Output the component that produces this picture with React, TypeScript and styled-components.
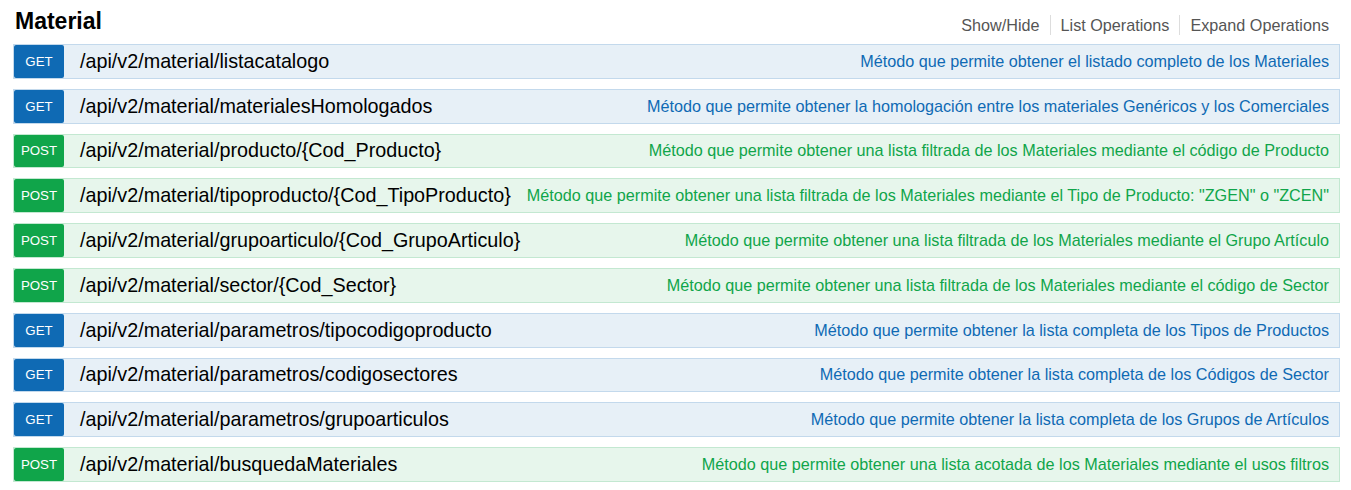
import React from "react";
import styled, { createGlobalStyle } from "styled-components";

const GlobalStyle = createGlobalStyle`
  html, body {
    margin: 0;
    padding: 0;
    background: #ffffff;
    font-family: "Liberation Sans", Arial, sans-serif;
  }
`;

type Method = "get" | "post";

const palette = {
  get: { badge: "#0f6ab4", bg: "#e7f0f7", border: "#c3d9ec", text: "#0f6ab4" },
  post: { badge: "#10a54a", bg: "#e7f6ec", border: "#c3e8d1", text: "#10a54a" },
};

const Page = styled.div`
  padding: 0 11px 0 13px;
`;

const Header = styled.div`
  display: flex;
  justify-content: space-between;
  align-items: flex-start;
  height: 44px;
`;

const Title = styled.h2`
  margin: 9px 0 0 2px;
  font-size: 23px;
  line-height: 24px;
  font-weight: bold;
  color: #000;
`;

const Links = styled.ul`
  display: flex;
  list-style: none;
  margin: 15px 0 0 0;
  padding: 0;
`;

const LinkItem = styled.li<{ $last?: boolean }>`
  font-size: 16.2px;
  line-height: 20px;
  color: #555555;
  padding: 0 10px;
  border-right: ${(p) => (p.$last ? "none" : "1px solid #dddddd")};
  padding-right: ${(p) => (p.$last ? "11px" : "10px")};
`;

const List = styled.ul`
  display: flex;
  flex-direction: column;
  gap: 10px;
  list-style: none;
  margin: 0;
  padding: 0;
`;

const Row = styled.li<{ $m: Method }>`
  display: flex;
  align-items: center;
  box-sizing: border-box;
  height: 34.8px;
  background: ${(p) => palette[p.$m].bg};
  border: 1px solid ${(p) => palette[p.$m].border};
`;

const Badge = styled.span<{ $m: Method }>`
  display: flex;
  align-items: center;
  justify-content: center;
  align-self: stretch;
  width: 50px;
  flex-shrink: 0;
  background: ${(p) => palette[p.$m].badge};
  color: #ffffff;
  font-size: 13.3px;
  border-radius: 2px;
`;

const Path = styled.span`
  margin-left: 16px;
  font-size: 19.75px;
  color: #000;
  white-space: nowrap;
`;

const Desc = styled.span<{ $m: Method }>`
  margin-left: auto;
  padding: 0 10px 0 16px;
  font-size: 16.2px;
  color: ${(p) => palette[p.$m].text};
  white-space: nowrap;
`;

const ops: { m: Method; path: string; desc: string }[] = [
  { m: "get", path: "/api/v2/material/listacatalogo", desc: "Método que permite obtener el listado completo de los Materiales" },
  { m: "get", path: "/api/v2/material/materialesHomologados", desc: "Método que permite obtener la homologación entre los materiales Genéricos y los Comerciales" },
  { m: "post", path: "/api/v2/material/producto/{Cod_Producto}", desc: "Método que permite obtener una lista filtrada de los Materiales mediante el código de Producto" },
  { m: "post", path: "/api/v2/material/tipoproducto/{Cod_TipoProducto}", desc: "Método que permite obtener una lista filtrada de los Materiales mediante el Tipo de Producto: \"ZGEN\" o \"ZCEN\"" },
  { m: "post", path: "/api/v2/material/grupoarticulo/{Cod_GrupoArticulo}", desc: "Método que permite obtener una lista filtrada de los Materiales mediante el Grupo Artículo" },
  { m: "post", path: "/api/v2/material/sector/{Cod_Sector}", desc: "Método que permite obtener una lista filtrada de los Materiales mediante el código de Sector" },
  { m: "get", path: "/api/v2/material/parametros/tipocodigoproducto", desc: "Método que permite obtener la lista completa de los Tipos de Productos" },
  { m: "get", path: "/api/v2/material/parametros/codigosectores", desc: "Método que permite obtener la lista completa de los Códigos de Sector" },
  { m: "get", path: "/api/v2/material/parametros/grupoarticulos", desc: "Método que permite obtener la lista completa de los Grupos de Artículos" },
  { m: "post", path: "/api/v2/material/busquedaMateriales", desc: "Método que permite obtener una lista acotada de los Materiales mediante el usos filtros" },
];

export default function App() {
  return (
    <>
      <GlobalStyle />
      <Page>
        <Header>
          <Title>Material</Title>
          <Links>
            <LinkItem>Show/Hide</LinkItem>
            <LinkItem>List Operations</LinkItem>
            <LinkItem $last>Expand Operations</LinkItem>
          </Links>
        </Header>
        <List>
          {ops.map((o) => (
            <Row key={o.path} $m={o.m}>
              <Badge $m={o.m}>{o.m.toUpperCase()}</Badge>
              <Path>{o.path}</Path>
              <Desc $m={o.m}>{o.desc}</Desc>
            </Row>
          ))}
        </List>
      </Page>
    </>
  );
}
